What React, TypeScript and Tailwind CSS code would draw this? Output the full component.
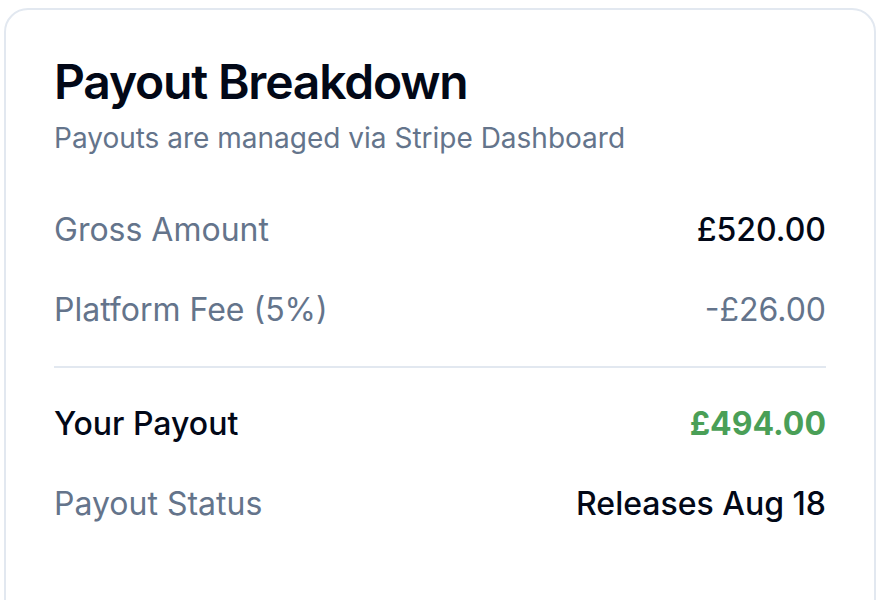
const rows = [
  { label: "Gross Amount", value: "£520.00", valueClass: "text-[#020817] font-medium" },
  { label: "Platform Fee (5%)", value: "-£26.00", valueClass: "text-[#64748b]" },
]

export default function App() {
  return (
    <div className="h-screen overflow-hidden bg-white pt-[8px] pl-[4px] pr-[6px] font-['Inter',sans-serif]">
      <div className="rounded-[24px] border-2 border-[#e2e8f0] bg-white h-[640px]">
        {/* Header */}
        <div className="p-[48px] flex flex-col gap-[12px]">
          <h2 className="text-[48px] leading-none font-semibold tracking-tight text-[#020817]">
            Payout Breakdown
          </h2>
          <p className="text-[28px] leading-[40px] text-[#64748b]">Payouts are managed via Stripe Dashboard</p>
        </div>

        {/* Content */}
        <div className="px-[48px] pb-[48px] flex flex-col gap-[32px]">
          {rows.map((row) => (
            <div key={row.label} className="flex items-center justify-between text-[32px] leading-[48px]">
              <span className="text-[#64748b]">{row.label}</span>
              <span className={row.valueClass}>{row.value}</span>
            </div>
          ))}
          <div className="border-t-2 border-[#e2e8f0] pt-[32px] flex flex-col gap-[32px]">
            <div className="flex items-center justify-between text-[32px] leading-[48px]">
              <span className="font-medium text-[#020817]">Your Payout</span>
              <span className="font-bold text-[#4a9f57]">£494.00</span>
            </div>
            <div className="flex items-center justify-between text-[32px] leading-[48px]">
              <span className="text-[#64748b]">Payout Status</span>
              <span className="font-medium text-[#020817]">Releases Aug 18</span>
            </div>
          </div>
        </div>
      </div>
    </div>
  )
}
